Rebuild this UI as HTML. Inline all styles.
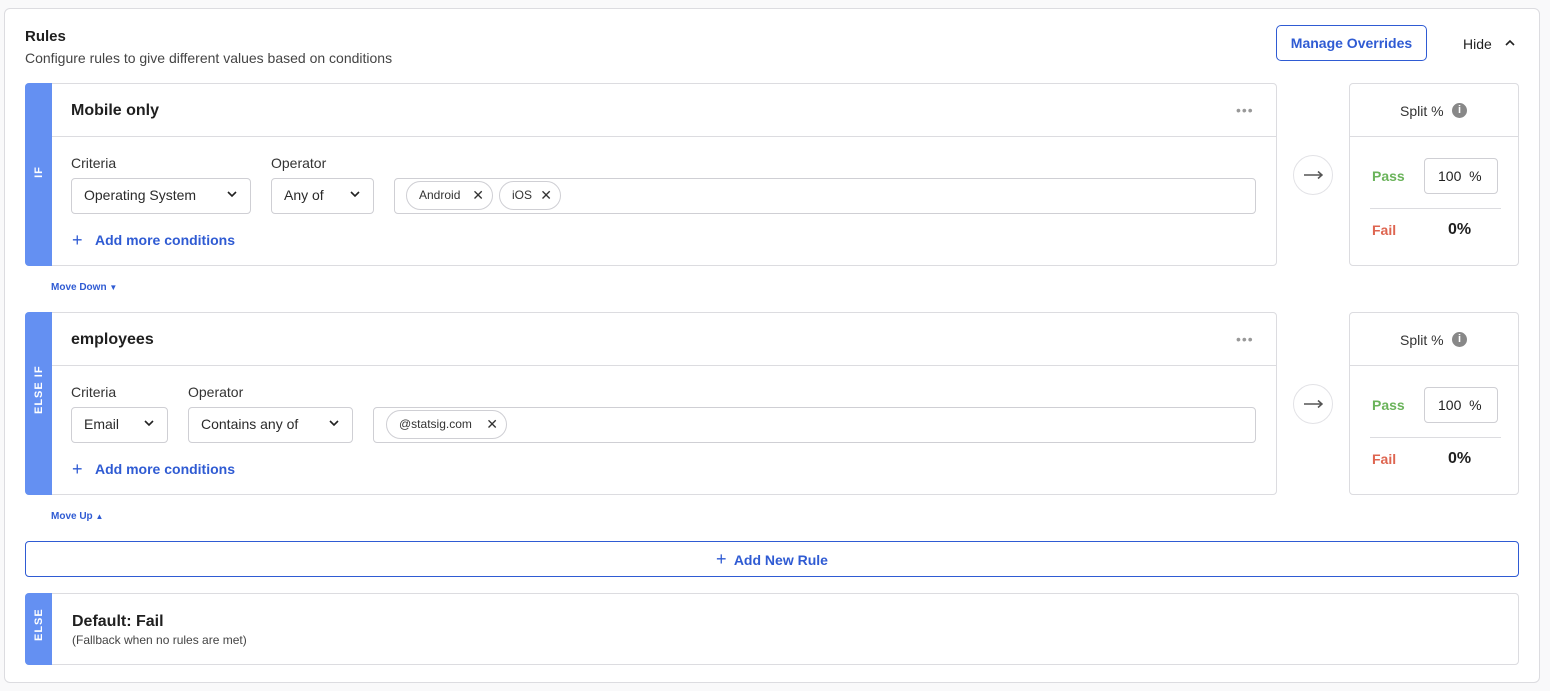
<!DOCTYPE html>
<html><head><style>
*{box-sizing:border-box;margin:0;padding:0}
body{width:1550px;height:691px;background:#f9f9fa;font-family:"Liberation Sans",sans-serif;color:#1f1f1f;position:relative;overflow:hidden}
.a{position:absolute}
.card{position:absolute;background:#fff;border:1px solid #dcdce0;border-radius:4px}
.stripe{position:absolute;left:-1px;top:-1px;bottom:-1px;width:27px;background:#6490f2;border-radius:4px 0 0 4px}
.vt{position:absolute;left:0;width:26px;color:#fff;font-size:11px;font-weight:bold;letter-spacing:1px;transform:rotate(-90deg);white-space:nowrap;text-align:center}
.box{position:absolute;border:1px solid #cfcfd4;border-radius:4px;background:#fff;font-size:14px;padding-left:12px;line-height:33px;color:#2a2a2a}
.chev{position:absolute;right:12px;top:9px}
.chip{position:absolute;top:2px;height:29px;border:1px solid #cfcfd4;border-radius:15px;font-size:12px;line-height:27px;padding-left:12px;color:#333}
.lbl{position:absolute;font-size:14px;color:#333}
.blue{color:#2f5bd3}
</style></head><body>
<div class="a" style="left:4px;top:8px;width:1536px;height:675px;background:#fff;border:1px solid #dcdce0;border-radius:6px"></div>
<div class="a" style="left:25px;top:28px;font-size:15px;font-weight:bold">Rules</div>
<div class="a" style="left:25px;top:50px;font-size:14px;color:#444">Configure rules to give different values based on conditions</div>
<div class="a" style="left:1276px;top:25px;width:151px;height:36px;border:1px solid #2f5bd3;border-radius:5px;font-size:14px;font-weight:bold;color:#2f5bd3;text-align:center;line-height:34px">Manage Overrides</div>
<div class="a" style="left:1463px;top:36px;font-size:14px">Hide</div>
<svg class="a" style="left:1504px;top:39px" width="12" height="8"><path d="M2 6L6 2L10 6" stroke="#222" stroke-width="1.6" fill="none"/></svg>

<div class="card" style="left:25px;top:83px;width:1252px;height:183px">
<div class="stripe"></div><div class="vt" style="top:82px">IF</div>
<div class="a" style="left:26px;right:0;top:52px;height:1px;background:#dcdce0"></div>
<div class="a" style="left:45px;top:18px;font-size:16px;font-weight:bold">Mobile only</div>
<div class="a" style="left:1210px;top:18px;font-size:14px;color:#999;letter-spacing:1px">•••</div>
<div class="lbl" style="left:45px;top:71px">Criteria</div>
<div class="lbl" style="left:245px;top:71px">Operator</div>
<div class="box" style="left:45px;top:94px;width:180px;height:36px">Operating System<svg class="chev" width="12" height="12"><path d="M2 4L6 8L10 4" stroke="#222" stroke-width="1.6" fill="none"/></svg></div>
<div class="box" style="left:245px;top:94px;width:103px;height:36px">Any of<svg class="chev" width="12" height="12"><path d="M2 4L6 8L10 4" stroke="#222" stroke-width="1.6" fill="none"/></svg></div>
<div class="box" style="left:368px;top:94px;width:862px;height:36px">
<div class="chip" style="left:11px;width:87px">Android<span style="position:absolute;right:8px;font-size:14px">✕</span></div>
<div class="chip" style="left:104px;width:62px">iOS<span style="position:absolute;right:8px;font-size:14px">✕</span></div>
</div>
<div class="a blue" style="left:46px;top:146px;font-size:18px">+</div>
<div class="a blue" style="left:69px;top:148px;font-size:14px;font-weight:bold">Add more conditions</div>
</div>
<div class="a" style="left:1293px;top:155px;width:40px;height:40px;border:1px solid #e2e2e6;border-radius:50%"></div>
<svg class="a" style="left:1303px;top:169px" width="22" height="12"><path d="M1 6H19M15 2.5L19 6L15 9.5" stroke="#555" stroke-width="1.5" fill="none"/></svg>
<div class="card" style="left:1349px;top:83px;width:170px;height:183px">
<div class="a" style="left:0;right:0;top:52px;height:1px;background:#dcdce0"></div>
<div class="a" style="left:50px;top:19px;font-size:14px;color:#333">Split %</div>
<div class="a" style="left:102px;top:19px;width:15px;height:15px;border-radius:50%;background:#888;color:#fff;font-size:11px;font-weight:bold;text-align:center;line-height:15px">i</div>
<div class="a" style="left:22px;top:84px;font-size:14px;color:#6ab35a;font-weight:bold">Pass</div>
<div class="a" style="left:74px;top:74px;width:74px;height:36px;border:1px solid #cfcfd4;border-radius:4px;font-size:14px;line-height:34px;padding-left:13px">100 &nbsp;%</div>
<div class="a" style="left:20px;top:124px;width:131px;height:1px;background:#dcdce0"></div>
<div class="a" style="left:22px;top:138px;font-size:14px;color:#de6550;font-weight:bold">Fail</div>
<div class="a" style="left:98px;top:137px;font-size:16px;font-weight:bold">0%</div>
</div>
<div class="a blue" style="left:51px;top:282px;font-size:10px;font-weight:bold">Move Down <span style="font-size:8px">▼</span></div>

<div class="card" style="left:25px;top:312px;width:1252px;height:183px">
<div class="stripe"></div><div class="vt" style="top:82px">ELSE IF</div>
<div class="a" style="left:26px;right:0;top:52px;height:1px;background:#dcdce0"></div>
<div class="a" style="left:45px;top:18px;font-size:16px;font-weight:bold">employees</div>
<div class="a" style="left:1210px;top:18px;font-size:14px;color:#999;letter-spacing:1px">•••</div>
<div class="lbl" style="left:45px;top:71px">Criteria</div>
<div class="lbl" style="left:162px;top:71px">Operator</div>
<div class="box" style="left:45px;top:94px;width:97px;height:36px">Email<svg class="chev" width="12" height="12"><path d="M2 4L6 8L10 4" stroke="#222" stroke-width="1.6" fill="none"/></svg></div>
<div class="box" style="left:162px;top:94px;width:165px;height:36px">Contains any of<svg class="chev" width="12" height="12"><path d="M2 4L6 8L10 4" stroke="#222" stroke-width="1.6" fill="none"/></svg></div>
<div class="box" style="left:347px;top:94px;width:883px;height:36px">
<div class="chip" style="left:12px;width:121px">@statsig.com<span style="position:absolute;right:8px;font-size:14px">✕</span></div>
</div>
<div class="a blue" style="left:46px;top:146px;font-size:18px">+</div>
<div class="a blue" style="left:69px;top:148px;font-size:14px;font-weight:bold">Add more conditions</div>
</div>
<div class="a" style="left:1293px;top:384px;width:40px;height:40px;border:1px solid #e2e2e6;border-radius:50%"></div>
<svg class="a" style="left:1303px;top:398px" width="22" height="12"><path d="M1 6H19M15 2.5L19 6L15 9.5" stroke="#555" stroke-width="1.5" fill="none"/></svg>
<div class="card" style="left:1349px;top:312px;width:170px;height:183px">
<div class="a" style="left:0;right:0;top:52px;height:1px;background:#dcdce0"></div>
<div class="a" style="left:50px;top:19px;font-size:14px;color:#333">Split %</div>
<div class="a" style="left:102px;top:19px;width:15px;height:15px;border-radius:50%;background:#888;color:#fff;font-size:11px;font-weight:bold;text-align:center;line-height:15px">i</div>
<div class="a" style="left:22px;top:84px;font-size:14px;color:#6ab35a;font-weight:bold">Pass</div>
<div class="a" style="left:74px;top:74px;width:74px;height:36px;border:1px solid #cfcfd4;border-radius:4px;font-size:14px;line-height:34px;padding-left:13px">100 &nbsp;%</div>
<div class="a" style="left:20px;top:124px;width:131px;height:1px;background:#dcdce0"></div>
<div class="a" style="left:22px;top:138px;font-size:14px;color:#de6550;font-weight:bold">Fail</div>
<div class="a" style="left:98px;top:137px;font-size:16px;font-weight:bold">0%</div>
</div>
<div class="a blue" style="left:51px;top:511px;font-size:10px;font-weight:bold">Move Up <span style="font-size:8px">▲</span></div>

<div class="a" style="left:25px;top:541px;width:1494px;height:36px;border:1px solid #2f5bd3;border-radius:4px;text-align:center;line-height:34px;font-size:14px;font-weight:bold;color:#2f5bd3"><span style="font-size:18px;font-weight:normal">+</span>&nbsp; Add New Rule</div>

<div class="card" style="left:25px;top:593px;width:1494px;height:72px">
<div class="stripe"></div><div class="vt" style="top:28px">ELSE</div>
<div class="a" style="left:46px;top:19px;font-size:16px;font-weight:bold">Default: Fail</div>
<div class="a" style="left:46px;top:39px;font-size:12px;color:#444">(Fallback when no rules are met)</div>
</div>
</body></html>
